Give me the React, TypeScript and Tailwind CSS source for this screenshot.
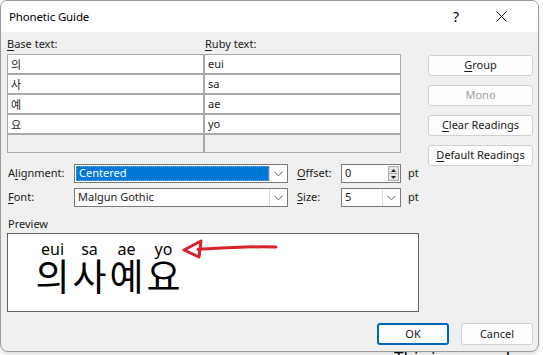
import React from "react";

const ui = { fontFamily: '"Noto Sans", "Noto Sans CJK KR", sans-serif' };

function U({ children }: { children: React.ReactNode }) {
  return <span className="underline underline-offset-2">{children}</span>;
}

function Chevron() {
  return (
    <svg width="9" height="6" viewBox="0 0 9 6" fill="none">
      <path d="M0.5 0.8 L4.5 4.8 L8.5 0.8" stroke="#606060" strokeWidth="1" />
    </svg>
  );
}

function DropBtn() {
  return (
    <div className="flex h-full w-[18px] items-center justify-center border-l border-[#d9d9d9] bg-white">
      <Chevron />
    </div>
  );
}

function SideButton({ children, disabled }: { children: React.ReactNode; disabled?: boolean }) {
  return (
    <div
      className={`flex h-[21px] w-[105px] items-center justify-center rounded-[3px] border border-[#d0d0d0] bg-[#fdfdfd] ${
        disabled ? "text-[#a0a0a0]" : "text-[#1a1a1a]"
      }`}
    >
      {children}
    </div>
  );
}

const rows = [
  ["의", "eui"],
  ["사", "sa"],
  ["예", "ae"],
  ["요", "yo"],
];

export default function App() {
  return (
    <div className="relative h-[355px] w-[543px] overflow-hidden bg-white text-[11px] text-[#1a1a1a]" style={ui}>
      <div className="absolute left-[394px] top-[348px] text-[17px] leading-[20px] text-black">This is a sample</div>

      <div className="relative z-10 flex h-[352px] w-[539px] flex-col overflow-hidden rounded-b-[8px] rounded-t-[7px] border border-[#9a9a9a] bg-[#f0f0f0] shadow-md">
        {/* title bar */}
        <div className="flex h-[31px] shrink-0 items-center bg-white pl-[8px] pr-[31px] text-[11.5px] text-black">
          <span className="flex-1 tracking-[-0.15px]">Phonetic Guide</span>
          <span className="mr-[37px] text-[14px]">?</span>
          <svg width="11" height="11" viewBox="0 0 11 11">
            <path d="M0.5 0.5 L10.5 10.5 M10.5 0.5 L0.5 10.5" stroke="#111" strokeWidth="1" />
          </svg>
        </div>

        <div className="flex shrink-0 flex-col px-[6px]">
          <div className="flex items-start">
            {/* left: grid + option rows */}
            <div className="flex w-[413px] shrink-0 flex-col">
              <div className="flex h-[22px] items-end pb-[2px]">
                <span className="w-[198px]">
                  <U>B</U>ase text:
                </span>
                <span>
                  <U>R</U>uby text:
                </span>
              </div>
              <div className="flex flex-col">
                {rows.map(([b, r]) => (
                  <div key={b} className="flex">
                    <div className="flex h-[20px] w-[197px] items-center border border-[#a9a9a9] bg-white pl-[3px] text-[11px]" style={{ fontFamily: '"Noto Sans CJK KR", sans-serif' }}>
                      {b}
                    </div>
                    <div className="flex h-[20px] w-[197px] items-center border border-[#a9a9a9] bg-white pl-[3px]">{r}</div>
                  </div>
                ))}
                <div className="flex">
                  <div className="h-[19px] w-[197px] border border-[#a9a9a9] bg-[#f0f0f0]" />
                  <div className="h-[19px] w-[197px] border border-[#a9a9a9] bg-[#f0f0f0]" />
                </div>
              </div>

              {/* alignment / offset */}
              <div className="mt-[11px] flex h-[19px] items-center whitespace-nowrap">
                <span className="w-[67px] shrink-0 pl-[1px]">
                  A<U>l</U>ignment:
                </span>
                <div className="flex h-[19px] w-[214px] shrink-0 items-center border border-[#7a7a7a] bg-white">
                  <div className="ml-[1px] flex h-[15px] flex-1 items-center border border-dotted border-[#6aa7e6] bg-[#0078d7] pl-[2px] text-white">
                    Centered
                  </div>
                  <DropBtn />
                </div>
                <span className="ml-[9px] w-[44px] shrink-0">
                  <U>O</U>ffset:
                </span>
                <div className="flex h-[19px] w-[60px] shrink-0 items-center border border-[#7a7a7a] bg-white">
                  <span className="flex-1 pl-[3px]">0</span>
                  <div className="mr-[1px] flex h-[15px] w-[11px] flex-col border border-[#adadad] bg-[#e5e5e5]">
                    <div className="flex flex-1 items-center justify-center">
                      <svg width="5" height="3" viewBox="0 0 5 3">
                        <path d="M0 3 L2.5 0 L5 3 Z" fill="#222" />
                      </svg>
                    </div>
                    <div className="h-px bg-[#adadad]" />
                    <div className="flex flex-1 items-center justify-center">
                      <svg width="5" height="3" viewBox="0 0 5 3">
                        <path d="M0 0 L2.5 3 L5 0 Z" fill="#222" />
                      </svg>
                    </div>
                  </div>
                </div>
                <span className="ml-[7px]">pt</span>
              </div>

              {/* font / size */}
              <div className="mt-[5px] flex h-[19px] items-center whitespace-nowrap">
                <span className="w-[67px] shrink-0 pl-[1px]">
                  <U>F</U>ont:
                </span>
                <div className="flex h-[19px] w-[214px] shrink-0 items-center border border-[#7a7a7a] bg-white">
                  <span className="flex-1 pl-[3px]">Malgun Gothic</span>
                  <DropBtn />
                </div>
                <span className="ml-[9px] w-[44px] shrink-0">
                  <U>S</U>ize:
                </span>
                <div className="flex h-[19px] w-[60px] shrink-0 items-center border border-[#7a7a7a] bg-white">
                  <span className="flex-1 pl-[3px]">5</span>
                  <DropBtn />
                </div>
                <span className="ml-[7px]">pt</span>
              </div>
            </div>

            {/* right: buttons */}
            <div className="ml-[8px] mt-[23px] flex flex-col gap-[9px]">
              <SideButton>
                <U>G</U>roup
              </SideButton>
              <SideButton disabled>Mono</SideButton>
              <SideButton>
                <U>C</U>lear Readings
              </SideButton>
              <SideButton>
                <U>D</U>efault Readings
              </SideButton>
            </div>
          </div>

          {/* preview */}
          <div className="mt-[8px] flex h-[18px] items-center pl-[1px]">Preview</div>
          <div className="relative h-[79px] w-[412px] border border-[#646464] bg-white">
            <div className="ml-[26px] mt-[8px] flex" style={{ fontFamily: '"Noto Sans CJK KR", sans-serif' }}>
              {rows.map(([b, r]) => (
                <div key={b} className="flex w-[37px] flex-col items-center">
                  <span className="text-[16px] leading-[15px] text-black" style={{ fontFamily: '"Noto Sans", sans-serif' }}>
                    {r}
                  </span>
                  <span className="text-[37px] leading-[36px] text-black">{b}</span>
                </div>
              ))}
            </div>
            <svg className="absolute left-0 top-0" width="412" height="79" viewBox="0 0 412 79" fill="none">
              <path d="M176 16 L193 7 L191 23 Z" stroke="#d8232a" strokeWidth="3" strokeLinejoin="round" />
              <path d="M190 15.5 C215 14 240 12 268 13" stroke="#d8232a" strokeWidth="3" strokeLinecap="round" />
            </svg>
          </div>

          {/* OK / Cancel */}
          <div className="-mr-[1px] mt-[11px] flex justify-end gap-[12px]">
            <div className="flex h-[22px] w-[72px] items-center justify-center rounded-[3px] border-2 border-[#0067c0] bg-[#fdfdfd]">
              OK
            </div>
            <div className="flex h-[22px] w-[72px] items-center justify-center rounded-[3px] border border-[#d0d0d0] bg-[#fdfdfd]">
              Cancel
            </div>
          </div>
        </div>
      </div>
    </div>
  );
}
